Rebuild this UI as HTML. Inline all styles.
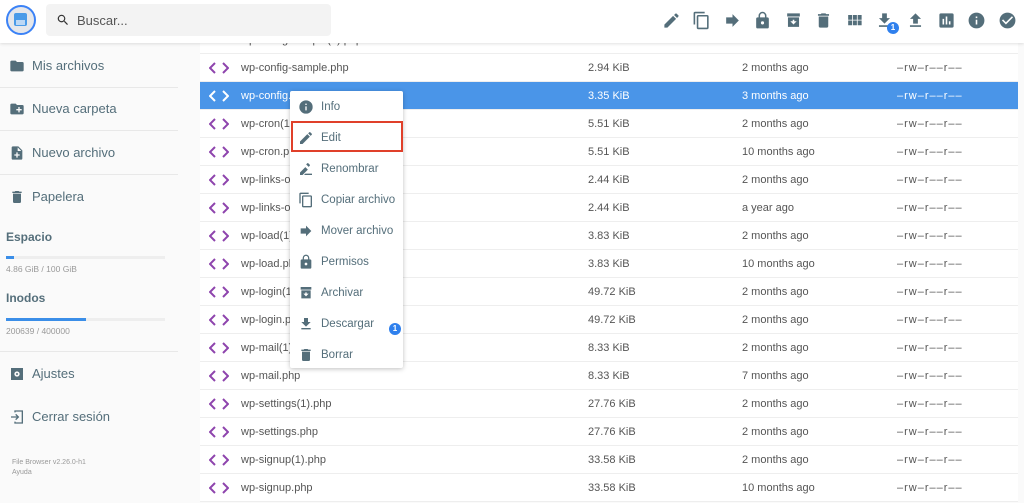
<!DOCTYPE html>
<html><head><meta charset="utf-8"><style>
*{margin:0;padding:0;box-sizing:border-box}
body{width:1024px;height:503px;overflow:hidden;background:#fafafa;font-family:"Liberation Sans",sans-serif;position:relative;color:#546e7a}
.hdr{position:absolute;left:0;top:0;width:1024px;height:43px;background:#fff;box-shadow:0 1px 3px rgba(0,0,0,.12);z-index:5}
.logo{position:absolute;left:6px;top:5px;width:30px;height:30px;border-radius:50%;border:2.5px solid #3b82f6;background:#e5e7eb}
.logo i{position:absolute;left:6px;top:6px;width:13px;height:13px;background:#4a9be8;border-radius:2px}
.logo b{position:absolute;left:8px;top:13px;width:9px;height:5px;background:#bcd8f5}
.search{position:absolute;left:46px;top:4px;width:285px;height:32px;background:#f3f3f3;border-radius:4px}
.search span{position:absolute;left:31px;top:9px;font-size:13px;color:#555}
.ti{position:absolute;top:11px}
.it{position:absolute;left:0;font-size:13px;color:#546e7a}
.it span{position:absolute;left:32px;top:0;white-space:nowrap}
.hr{position:absolute;left:0;width:178px;height:1px;background:#e8e8e8}
.lbl{position:absolute;left:6px;font-size:12px;color:#546e7a;font-weight:bold}
.bar{position:absolute;left:6px;width:159px;height:3px;background:#eee}
.bar i{display:block;height:3px;background:#3b8ee8}
.sm{position:absolute;left:6px;font-size:8.5px;color:#999}
.list{position:absolute;left:200px;top:26px;width:818px}
.row{position:absolute;left:0;width:818px;height:28px;background:#fff;border-bottom:1px solid #eee;font-size:11px;color:#555}
.row.sel{background:#4a95e8;color:#fff}
.row .ic{position:absolute;left:9px;top:8px}
.row .n{position:absolute;left:41px;top:8px}
.row .s{position:absolute;left:388px;top:8px}
.row .m{position:absolute;left:542px;top:8px}
.row .p{position:absolute;left:697px;top:8px;letter-spacing:1px}
.menu{position:absolute;left:290px;top:91px;width:113px;height:277px;background:#fff;box-shadow:0 1px 5px rgba(0,0,0,.25);border-radius:2px;z-index:6}
.mi{position:absolute;left:0;width:113px;height:31px;font-size:11.5px;color:#546e7a}
.mi span{position:absolute;left:31px;top:10px;white-space:nowrap}
.mi svg{position:absolute;left:8px;top:8px}
.red{position:absolute;left:1px;top:30px;width:112px;height:31px;border:2.5px solid #e0402a}
.badge{position:absolute;width:12px;height:12px;border-radius:50%;background:#2f80ed;color:#fff;font-size:8px;font-weight:bold;text-align:center;line-height:12px}
</style></head><body>
<div class="hdr">
 <div class="logo"><i></i><b></b></div>
 <div class="search"><svg style="position:absolute;left:10px;top:9px" width="14" height="14" viewBox="0 0 24 24"><path fill="#333" d="M15.5 14h-.8l-.3-.3A6.5 6.5 0 1 0 9.5 16a6.5 6.5 0 0 0 4.2-1.6l.3.3v.8l5 5 1.5-1.5-5-5zm-6 0a4.5 4.5 0 1 1 0-9 4.5 4.5 0 0 1 0 9z"/></svg><span>Buscar...</span></div>
 <svg class="ti" style="left:662px" width="19" height="19" viewBox="0 0 24 24"><path fill="#546e7a" d="M3 17.2V21h3.8L17.8 10l-3.8-3.8L3 17.2zM20.7 7a1 1 0 0 0 0-1.4l-2.3-2.3a1 1 0 0 0-1.4 0l-1.8 1.8 3.8 3.8L20.7 7z"/></svg>
 <svg class="ti" style="left:692px" width="19" height="19" viewBox="0 0 24 24"><path fill="#546e7a" d="M16 1H4a2 2 0 0 0-2 2v14h2V3h12V1zm3 4H8a2 2 0 0 0-2 2v14a2 2 0 0 0 2 2h11a2 2 0 0 0 2-2V7a2 2 0 0 0-2-2zm0 16H8V7h11v14z"/></svg>
 <svg class="ti" style="left:723px" width="19" height="19" viewBox="0 0 24 24"><path fill="#546e7a" d="M12 8V4l8 8-8 8v-4H4V8z"/></svg>
 <svg class="ti" style="left:753px" width="19" height="19" viewBox="0 0 24 24"><path fill="#546e7a" d="M18 8h-1V6a5 5 0 0 0-10 0v2H6a2 2 0 0 0-2 2v10a2 2 0 0 0 2 2h12a2 2 0 0 0 2-2V10a2 2 0 0 0-2-2zm-6 9a2 2 0 1 1 0-4 2 2 0 0 1 0 4zm3.1-9H8.9V6a3.1 3.1 0 0 1 6.2 0v2z"/></svg>
 <svg class="ti" style="left:784px" width="19" height="19" viewBox="0 0 24 24"><path fill="#546e7a" d="M20 3H4v4h16V3zM5 8v12h14V8H5zm7 9-4-4h3v-2h2v2h3l-4 4z"/></svg>
 <svg class="ti" style="left:814px" width="19" height="19" viewBox="0 0 24 24"><path fill="#546e7a" d="M6 19a2 2 0 0 0 2 2h8a2 2 0 0 0 2-2V7H6v12zM19 4h-3.5l-1-1h-5l-1 1H5v2h14V4z"/></svg>
 <svg class="ti" style="left:845px" width="19" height="19" viewBox="0 0 24 24"><path fill="#546e7a" d="M4 11h5V5H4v6zm0 7h5v-6H4v6zm6 0h5v-6h-5v6zm6 0h5v-6h-5v6zm-6-7h5V5h-5v6zm6-6v6h5V5h-5z"/></svg>
 <svg class="ti" style="left:875px" width="19" height="19" viewBox="0 0 24 24"><path fill="#546e7a" d="M19 9h-4V3H9v6H5l7 7 7-7zM5 18v2h14v-2H5z"/></svg>
 <div class="badge" style="left:887px;top:22px">1</div>
 <svg class="ti" style="left:906px" width="19" height="19" viewBox="0 0 24 24"><path fill="#546e7a" d="M9 16h6v-6h4l-7-7-7 7h4zm-4 2h14v2H5z"/></svg>
 <svg class="ti" style="left:937px" width="19" height="19" viewBox="0 0 24 24"><path fill="#546e7a" d="M19 3H5a2 2 0 0 0-2 2v14a2 2 0 0 0 2 2h14a2 2 0 0 0 2-2V5a2 2 0 0 0-2-2zM9 17H7v-7h2v7zm4 0h-2V7h2v10zm4 0h-2v-4h2v4z"/></svg>
 <svg class="ti" style="left:967px" width="19" height="19" viewBox="0 0 24 24"><path fill="#546e7a" d="M12 2a10 10 0 1 0 0 20 10 10 0 0 0 0-20zm1 15h-2v-6h2v6zm0-8h-2V7h2v2z"/></svg>
 <svg class="ti" style="left:998px" width="19" height="19" viewBox="0 0 24 24"><path fill="#546e7a" d="M12 2a10 10 0 1 0 0 20 10 10 0 0 0 0-20zm-2 15-5-5 1.4-1.4 3.6 3.6 7.6-7.6L19 8l-9 9z"/></svg>
</div>

<div class="it" style="top:58px"><svg style="position:absolute;left:9px;top:0" width="16" height="16" viewBox="0 0 24 24"><path fill="#546e7a" d="M10 4H4a2 2 0 0 0-2 2v12a2 2 0 0 0 2 2h16a2 2 0 0 0 2-2V8a2 2 0 0 0-2-2h-8l-2-2z"/></svg><span>Mis archivos</span></div>
<div class="hr" style="top:87px"></div>
<div class="it" style="top:101px"><svg style="position:absolute;left:9px;top:0" width="16" height="16" viewBox="0 0 24 24"><path fill="#546e7a" d="M20 6h-8l-2-2H4a2 2 0 0 0-2 2v12a2 2 0 0 0 2 2h16a2 2 0 0 0 2-2V8a2 2 0 0 0-2-2zm-1 8h-3v3h-2v-3h-3v-2h3V9h2v3h3v2z"/></svg><span>Nueva carpeta</span></div>
<div class="hr" style="top:130px"></div>
<div class="it" style="top:145px"><svg style="position:absolute;left:9px;top:0" width="16" height="16" viewBox="0 0 24 24"><path fill="#546e7a" d="M14 2H6a2 2 0 0 0-2 2v16a2 2 0 0 0 2 2h12a2 2 0 0 0 2-2V8l-6-6zm2 14h-3v3h-2v-3H8v-2h3v-3h2v3h3v2zm-3-7V3.5L18.5 9H13z"/></svg><span>Nuevo archivo</span></div>
<div class="hr" style="top:174px"></div>
<div class="it" style="top:189px"><svg style="position:absolute;left:9px;top:0" width="16" height="16" viewBox="0 0 24 24"><path fill="#546e7a" d="M6 19a2 2 0 0 0 2 2h8a2 2 0 0 0 2-2V7H6v12zM19 4h-3.5l-1-1h-5l-1 1H5v2h14V4z"/></svg><span>Papelera</span></div>
<div class="lbl" style="top:230px">Espacio</div>
<div class="bar" style="top:256px"><i style="width:8px"></i></div>
<div class="sm" style="top:264px">4.86 GiB / 100 GiB</div>
<div class="lbl" style="top:291px">Inodos</div>
<div class="bar" style="top:318px"><i style="width:80px"></i></div>
<div class="sm" style="top:326px">200639 / 400000</div>
<div class="hr" style="top:351px"></div>
<div class="it" style="top:366px"><svg style="position:absolute;left:9px;top:0" width="16" height="16" viewBox="0 0 24 24"><path fill="#546e7a" d="M3 3h18v18H3V3zm9 5a4 4 0 1 0 0 8 4 4 0 0 0 0-8zm0 2.5a1.5 1.5 0 1 1 0 3 1.5 1.5 0 0 1 0-3z"/></svg><span>Ajustes</span></div>
<div class="it" style="top:409px"><svg style="position:absolute;left:9px;top:0" width="16" height="16" viewBox="0 0 24 24"><path fill="none" stroke="#546e7a" stroke-width="2" d="M9 5V3h11v18H9v-2M3 12h11M10 8l4 4-4 4"/></svg><span>Cerrar sesión</span></div>
<div class="sm" style="left:12px;top:459px;font-size:7px">File Browser v2.26.0-h1</div>
<div class="sm" style="left:12px;top:469px;font-size:7px">Ayuda</div>

<div class="list">
<div class="row" style="top:0"><span class="n">wp-config-sample(1).php</span></div>
</div>
<div class="list" id="L"></div>

<div class="menu">
 <div class="mi" style="top:0"><svg width="16" height="16" viewBox="0 0 24 24"><path fill="#546e7a" d="M12 2a10 10 0 1 0 0 20 10 10 0 0 0 0-20zm1 15h-2v-6h2v6zm0-8h-2V7h2v2z"/></svg><span>Info</span></div>
 <div class="mi" style="top:31px"><svg width="16" height="16" viewBox="0 0 24 24"><path fill="#546e7a" d="M3 17.2V21h3.8L17.8 10l-3.8-3.8L3 17.2zM20.7 7a1 1 0 0 0 0-1.4l-2.3-2.3a1 1 0 0 0-1.4 0l-1.8 1.8 3.8 3.8L20.7 7z"/></svg><span>Edit</span></div>
 <div class="red"></div>
 <div class="mi" style="top:62px"><svg width="16" height="16" viewBox="0 0 24 24"><path fill="#546e7a" d="M3 17.2V21h3.8l8-8-3.8-3.8-8 8zM17.7 7a1 1 0 0 0 0-1.4l-2.3-2.3a1 1 0 0 0-1.4 0l-1.8 1.8 3.8 3.8L17.7 7zM11 19h10v2H9z"/></svg><span>Renombrar</span></div>
 <div class="mi" style="top:93px"><svg width="16" height="16" viewBox="0 0 24 24"><path fill="#546e7a" d="M16 1H4a2 2 0 0 0-2 2v14h2V3h12V1zm3 4H8a2 2 0 0 0-2 2v14a2 2 0 0 0 2 2h11a2 2 0 0 0 2-2V7a2 2 0 0 0-2-2zm0 16H8V7h11v14z"/></svg><span>Copiar archivo</span></div>
 <div class="mi" style="top:124px"><svg width="16" height="16" viewBox="0 0 24 24"><path fill="#546e7a" d="M12 8V4l8 8-8 8v-4H4V8z"/></svg><span>Mover archivo</span></div>
 <div class="mi" style="top:155px"><svg width="16" height="16" viewBox="0 0 24 24"><path fill="#546e7a" d="M18 8h-1V6a5 5 0 0 0-10 0v2H6a2 2 0 0 0-2 2v10a2 2 0 0 0 2 2h12a2 2 0 0 0 2-2V10a2 2 0 0 0-2-2zm-6 9a2 2 0 1 1 0-4 2 2 0 0 1 0 4zm3.1-9H8.9V6a3.1 3.1 0 0 1 6.2 0v2z"/></svg><span>Permisos</span></div>
 <div class="mi" style="top:186px"><svg width="16" height="16" viewBox="0 0 24 24"><path fill="#546e7a" d="M20 3H4v4h16V3zM5 8v12h14V8H5zm7 9-4-4h3v-2h2v2h3l-4 4z"/></svg><span>Archivar</span></div>
 <div class="mi" style="top:217px"><svg width="16" height="16" viewBox="0 0 24 24"><path fill="#546e7a" d="M19 9h-4V3H9v6H5l7 7 7-7zM5 18v2h14v-2H5z"/></svg><span>Descargar</span></div>
 <div class="badge" style="left:99px;top:232px">1</div>
 <div class="mi" style="top:248px"><svg width="16" height="16" viewBox="0 0 24 24"><path fill="#546e7a" d="M6 19a2 2 0 0 0 2 2h8a2 2 0 0 0 2-2V7H6v12zM19 4h-3.5l-1-1h-5l-1 1H5v2h14V4z"/></svg><span>Borrar</span></div>
</div>

<script>
var d=[["wp-config-sample.php","2.94 KiB","2 months ago"],["wp-config.php","3.35 KiB","3 months ago"],["wp-cron(1).php","5.51 KiB","2 months ago"],["wp-cron.php","5.51 KiB","10 months ago"],["wp-links-opml(1).php","2.44 KiB","2 months ago"],["wp-links-opml.php","2.44 KiB","a year ago"],["wp-load(1).php","3.83 KiB","2 months ago"],["wp-load.php","3.83 KiB","10 months ago"],["wp-login(1).php","49.72 KiB","2 months ago"],["wp-login.php","49.72 KiB","2 months ago"],["wp-mail(1).php","8.33 KiB","2 months ago"],["wp-mail.php","8.33 KiB","7 months ago"],["wp-settings(1).php","27.76 KiB","2 months ago"],["wp-settings.php","27.76 KiB","2 months ago"],["wp-signup(1).php","33.58 KiB","2 months ago"],["wp-signup.php","33.58 KiB","10 months ago"]];
var h='';d.forEach(function(r,i){var sel=i==1;var c=sel?'#fff':'#8e44ad';
h+='<div class="row'+(sel?' sel':'')+'" style="top:'+(28+i*28)+'px"><svg class="ic" width="20" height="12" viewBox="0 0 20 12"><path fill="none" stroke="'+c+'" stroke-width="2" d="M6 1 1 6l5 5M14 1l5 5-5 5"/></svg><span class="n">'+r[0]+'</span><span class="s">'+r[1]+'</span><span class="m">'+r[2]+'</span><span class="p">&#8211;rw&#8211;r&#8211;&#8211;r&#8211;&#8211;</span></div>';});
document.getElementById('L').innerHTML=h;
</script>
</body></html>
